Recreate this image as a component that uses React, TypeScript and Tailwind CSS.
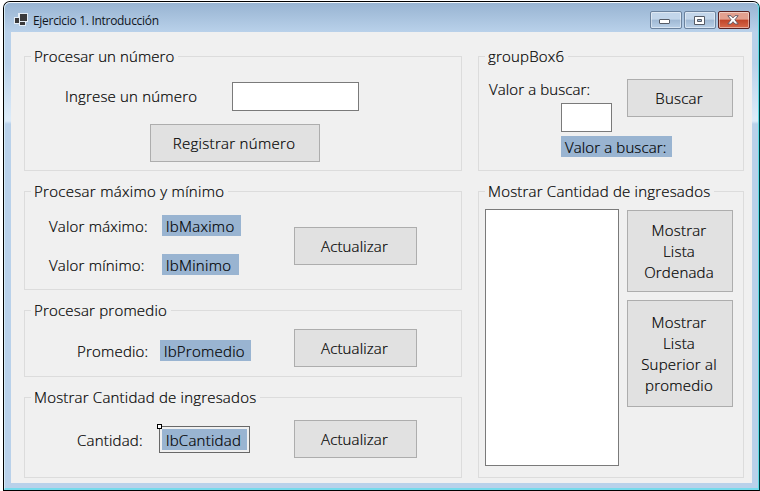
import type { ReactNode } from "react";

type Styled = { className?: string; children?: ReactNode };

function GroupBox({ title, spacing = "tracking-[0.2px]", className = "", children }: Styled & { title: string; spacing?: string }) {
  return (
    <section className={`relative border border-[#dcdcdc] ${className}`}>
      <h2 className={`absolute -top-[12px] left-[6px] h-[22px] whitespace-nowrap bg-[#f0f0f0] pr-[4px] pl-[3px] leading-[23px] ${spacing}`}>
        {title}
      </h2>
      {children}
    </section>
  );
}

function Button({ className = "", children }: Styled) {
  return (
    <button className={`shrink-0 border border-[#adadad] bg-[#e1e1e1] pr-[2px] text-center leading-[21px] ${className}`}>
      {children}
    </button>
  );
}

function Label({ className = "", children }: Styled) {
  return <span className={`block h-[21px] shrink-0 whitespace-nowrap leading-[23px] ${className}`}>{children}</span>;
}

function Value({ className = "", children }: Styled) {
  return (
    <span className={`block h-[21px] shrink-0 whitespace-nowrap bg-[#99b4d1] pl-[4px] leading-[23px] ${className}`}>
      {children}
    </span>
  );
}

function FormIcon() {
  return (
    <svg width="14" height="13" viewBox="0 0 14 13" shapeRendering="crispEdges">
      <path d="M0 4h4V0h10v9h-2v4H5v-2H0z" fill="#e4edf6" />
      <path d="M1 5h4v5H1zM6 1h7v7H6zM6 9h5v3H6z" fill="#3a3a3c" />
    </svg>
  );
}

function Caption() {
  const frame =
    "flex h-[18px] w-[32px] items-center justify-center rounded-[2px] border shadow-[inset_0_0_0_1px_rgba(255,255,255,0.45)]";
  const blue = "border-[#6b829d] bg-linear-to-b from-[#c3d6ea] from-45% via-[#9fb8d3] via-50% to-[#b9d0e8]";
  return (
    <div className="mt-[8px] flex gap-[2px]">
      <div className={`${frame} ${blue}`}>
        <svg className="mt-[3px] -ml-[2px]" width="12" height="6" viewBox="0 0 12 6">
          <rect x="0.5" y="0.5" width="10" height="4" rx="0.5" fill="#fff" stroke="#555b66" />
        </svg>
      </div>
      <div className={`${frame} ${blue}`}>
        <svg className="-ml-[2px]" width="11" height="9" viewBox="0 0 11 9">
          <path d="M.5.5h10v8H.5zM3.500 3.500v2h4v-2z" fill="#fff" fillRule="evenodd" stroke="#555b66" />
        </svg>
      </div>
      <div className={`${frame} border-[#5a2222] bg-linear-to-b from-[#e3a08f] from-45% via-[#c04428] via-50% to-[#d8694b]`}>
        <svg className="-ml-[2px]" width="12" height="10" viewBox="0 0 12 10">
          <path d="M.8.700h3.200L6 2.900 8 .7h3.200L7.900 4.800l3.300 4.200H8L6 6.700 4 9H.8l3.300-4.200z" fill="#fff" stroke="#5e5360" strokeWidth=".9" />
        </svg>
      </div>
    </div>
  );
}

export default function App() {
  return (
    <div className="h-[491px] w-[760px] overflow-hidden bg-white pt-px pl-[3px] font-['Open_Sans','Noto_Sans',sans-serif] text-[15px] font-light text-black [-webkit-text-stroke:0.2px_#000]">
      <div className="h-[490px] w-[757px] rounded-t-[7px] border border-black bg-[#b9d1ea] border-r-[#003b3f]">
        <div className="h-[488px] rounded-t-[6px] border-t border-r border-b-2 border-l border-t-[#f4f9fd] border-r-[#5fdde5] border-b-[#76dbec] border-l-[#d5ebf6] bg-[linear-gradient(#98b4d2,#b9d1ea_29px,#b9d1ea_60px,#dcebf9_115px,#dcebf9_118px,#b9d1ea_121px)]">
          <header className="flex h-[29px] pl-[9px]">
            <div className="mt-[10px] w-[19px]"><FormIcon /></div>
            <h1 className="mt-[9px] flex-1 text-[12px] leading-[18px] font-normal tracking-[-0.3px] text-[#10151c] [-webkit-text-stroke:0]">
              Ejercicio 1. Introducción
            </h1>
            <div className="mr-[8px]"><Caption /></div>
          </header>
          <main className="ml-[6px] flex h-[451px] w-[741px] gap-[16px] bg-[#f0f0f0] pt-[24px] pl-[13px]">
            <div className="flex w-[438px] flex-col gap-[20px]">
              <GroupBox title="Procesar un número" spacing="tracking-[0.08px]" className="h-[115px]">
                <div className="mt-[25px] flex pl-[40px]">
                  <Label className="mt-[3px] w-[167px] tracking-[0.18px]">Ingrese un número</Label>
                  <div className="h-[29px] w-[127px] border border-[#7a7a7a] bg-white" />
                </div>
                <Button className="mt-[13px] ml-[125px] h-[38px] w-[170px] tracking-[0.3px]">Registrar número</Button>
              </GroupBox>
              <GroupBox title="Procesar máximo y mínimo" spacing="tracking-[0.3px]" className="flex h-[99px] pl-[24px]">
                <div className="mt-[23px] flex w-[245px] flex-col gap-[18px]">
                  <div className="flex">
                    <Label className="w-[113px] tracking-[0.2px]">Valor máximo:</Label>
                    <Value className="w-[79px] tracking-[0.3px]">lbMaximo</Value>
                  </div>
                  <div className="flex">
                    <Label className="w-[113px] tracking-[0.2px]">Valor mínimo:</Label>
                    <Value className="w-[77px] tracking-[0.3px]">lbMinimo</Value>
                  </div>
                </div>
                <Button className="mt-[35px] h-[38px] w-[123px] tracking-[0.15px]">Actualizar</Button>
              </GroupBox>
              <GroupBox title="Procesar promedio" className="flex h-[67px] pl-[52px]">
                <Label className="mt-[29px] w-[83px] tracking-[0.2px]">Promedio:</Label>
                <Value className="mt-[29px] w-[91px] tracking-[0.25px]">lbPromedio</Value>
                <Button className="mt-[18px] ml-[43px] h-[38px] w-[123px] tracking-[0.15px]">Actualizar</Button>
              </GroupBox>
              <GroupBox title="Mostrar Cantidad de ingresados" className="flex h-[81px] pl-[52px]">
                <Label className="mt-[31px] w-[82px] tracking-[0.2px]">Cantidad:</Label>
                <div className="relative mt-[28px] h-[27px] w-[91px] border border-[#686868] p-[2px]">
                  <Value className="w-[85px] tracking-[0.25px]">lbCantidad</Value>
                  <i className="absolute -top-[3px] -left-[3px] size-[5px] border border-black bg-white" />
                </div>
                <Button className="mt-[22px] ml-[44px] h-[38px] w-[123px] tracking-[0.15px]">Actualizar</Button>
              </GroupBox>
            </div>
            <div className="flex w-[266px] flex-col gap-[20px]">
              <GroupBox title="groupBox6" className="flex h-[115px] pl-[10px]">
                <div className="mt-[21px] w-[138px]">
                  <Label className="w-[110px] tracking-[0.1px]">Valor a buscar:</Label>
                  <div className="mt-[4px] ml-[72px] h-[29px] w-[51px] border border-[#7a7a7a] bg-white" />
                  <Value className="mt-[4px] ml-[72px] w-[111px] tracking-[0.12px]">Valor a buscar:</Value>
                </div>
                <Button className="mt-[22px] h-[38px] w-[106px] tracking-[0.2px]">Buscar</Button>
              </GroupBox>
              <GroupBox title="Mostrar Cantidad de ingresados" className="flex h-[287px] gap-[8px] pl-[6px]">
                <div className="mt-[17px] h-[257px] w-[134px] border border-[#7a7a7a] bg-white" />
                <div className="mt-[18px] flex flex-col gap-[8px]">
                  <Button className="h-[82px] w-[106px] tracking-[0.2px]">Mostrar<br />Lista<br />Ordenada</Button>
                  <Button className="h-[107px] w-[106px] tracking-[0.2px]">Mostrar<br />Lista<br />Superior al<br />promedio</Button>
                </div>
              </GroupBox>
            </div>
          </main>
        </div>
      </div>
    </div>
  );
}
